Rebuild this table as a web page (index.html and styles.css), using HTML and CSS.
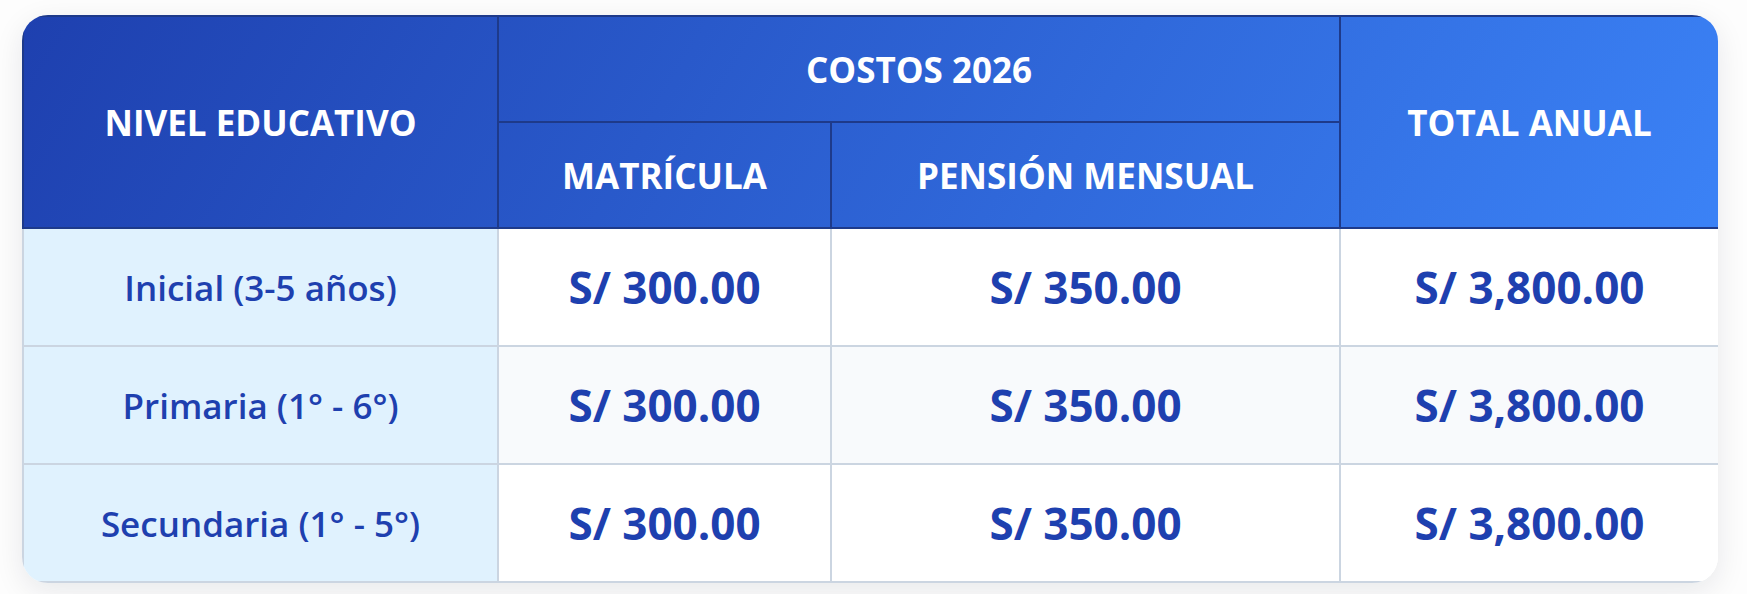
FILE: index.html
```html
<!DOCTYPE html>
<html lang="es">
<head>
<meta charset="utf-8">
<title>Costos 2026</title>
<link rel="stylesheet" href="styles.css">
</head>
<body>
<div class="page">
  <div class="card">
    <table class="costs">
      <colgroup>
        <col class="c-level">
        <col class="c-mat">
        <col class="c-pen">
        <col class="c-total">
      </colgroup>
      <thead>
        <tr class="head-top">
          <th rowspan="2">NIVEL EDUCATIVO</th>
          <th colspan="2">COSTOS 2026</th>
          <th rowspan="2">TOTAL ANUAL</th>
        </tr>
        <tr class="head-sub">
          <th>MATRÍCULA</th>
          <th>PENSIÓN MENSUAL</th>
        </tr>
      </thead>
      <tbody>
        <tr>
          <td class="level">Inicial (3-5 años)</td>
          <td class="amount">S/ 300.00</td>
          <td class="amount">S/ 350.00</td>
          <td class="amount">S/ 3,800.00</td>
        </tr>
        <tr class="alt">
          <td class="level">Primaria (1° - 6°)</td>
          <td class="amount">S/ 300.00</td>
          <td class="amount">S/ 350.00</td>
          <td class="amount">S/ 3,800.00</td>
        </tr>
        <tr>
          <td class="level">Secundaria (1° - 5°)</td>
          <td class="amount">S/ 300.00</td>
          <td class="amount">S/ 350.00</td>
          <td class="amount">S/ 3,800.00</td>
        </tr>
      </tbody>
    </table>
  </div>
</div>
</body>
</html>
```
FILE: styles.css
```css
html, body {
  margin: 0;
  padding: 0;
  background: #fdfdfd;
}

body {
  font-family: "Open Sans", "Noto Sans", "DejaVu Sans", sans-serif;
}

.page {
  padding: 15px 29px 12px 22px;
}

.card {
  width: 1696px;
  border-radius: 26px;
  overflow: hidden;
  box-shadow: 0 8px 30px rgba(15, 23, 42, 0.09);
  background: #ffffff;
}

.costs {
  width: 1696px;
  border-collapse: collapse;
  table-layout: fixed;
}

.c-level { width: 475px; }
.c-mat { width: 333px; }
.c-pen { width: 509px; }
.c-total { width: 379px; }

.costs thead {
  background: linear-gradient(120deg, #1e40af 0%, #3b82f6 100%);
}

.costs th {
  border: 2px solid #1e3a8a;
  color: #ffffff;
  font-size: 35px;
  font-weight: 700;
  text-align: center;
  padding: 0;
  line-height: 1;
}

.head-top th {
  height: 104px;
}

.head-sub th {
  height: 104px;
}

.costs td {
  border: 2px solid #cbd5e1;
  text-align: center;
  color: #1e40af;
  height: 116px;
  padding: 0;
  background: #ffffff;
}

.costs tbody tr:first-child td {
  border-top-color: #1e3a8a;
}

.costs tbody tr.alt td {
  background: #f8fafc;
}

.costs tbody tr td.level {
  background: #e0f2fe;
  font-size: 35px;
  font-weight: 600;
}

.costs td.amount {
  font-size: 44px;
  font-weight: 700;
}
```
